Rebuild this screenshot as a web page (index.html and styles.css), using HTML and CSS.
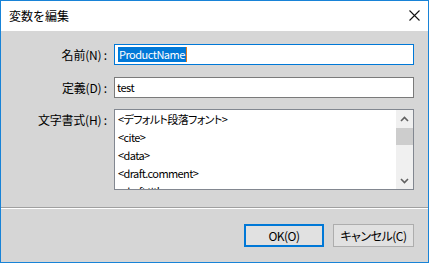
FILE: index.html
```html
<!DOCTYPE html>
<html>

<head>
  <title>変数を編集</title>
  <link rel="stylesheet" href="styles.css">
</head>

<body>
  <div class="window">
    <div class="titlebar">
      <span class="title">変数を編集</span>
      <span class="close">
        <svg width="11" height="11" viewBox="0 0 11 11">
          <path d="M0.5 0.5 L10.5 10.5 M10.5 0.5 L0.5 10.5" stroke="#111" stroke-width="1.1" fill="none" />
        </svg>
      </span>
    </div>

    <div class="form">
      <label class="field-label">名前(N) :</label>
      <div class="textbox focused"><span class="selected">ProductName</span><span class="caret"></span></div>

      <label class="field-label">定義(D) :</label>
      <div class="textbox">test</div>

      <label class="field-label top">文字書式(H) :</label>
      <div class="listbox">
        <ul class="items">
          <li>&lt;デフォルト段落フォント&gt;</li>
          <li>&lt;cite&gt;</li>
          <li>&lt;data&gt;</li>
          <li>&lt;draft.comment&gt;</li>
          <li>&lt;draft.title&gt;</li>
        </ul>
        <div class="scrollbar">
          <div class="arrow">
            <svg width="9" height="6" viewBox="0 0 9 6">
              <path d="M1 5 L4.5 1.5 L8 5" stroke="#606060" stroke-width="1.6" fill="none" />
            </svg>
          </div>
          <div class="thumb"></div>
          <div class="track"></div>
          <div class="arrow">
            <svg width="9" height="6" viewBox="0 0 9 6">
              <path d="M1 1 L4.5 4.5 L8 1" stroke="#606060" stroke-width="1.6" fill="none" />
            </svg>
          </div>
        </div>
      </div>
    </div>

    <div class="footer">
      <button class="btn default">OK(O)</button>
      <button class="btn cancel">キャンセル(C)</button>
    </div>
  </div>
</body>

</html>
```

FILE: styles.css
```css
body {
  margin: 0;
  background: #ffffff;
  font-family: "Noto Sans CJK JP", sans-serif;
  font-feature-settings: "palt";
  font-size: 12px;
  color: #000000;
}

.window {
  width: 429px;
  height: 263px;
  box-sizing: border-box;
  border: 1px solid #1883d7;
  background: #d6d6d6;
  display: flex;
  flex-direction: column;
}

.titlebar {
  height: 30px;
  background: #ffffff;
  display: flex;
  align-items: center;
  padding: 0 8px 0 8px;
}

.title {
  font-size: 12px;
  line-height: 16px;
  font-feature-settings: normal;
}

.close {
  margin-left: auto;
  display: flex;
  margin-top: -1px;
}

.form {
  height: 176px;
  box-sizing: border-box;
  padding-top: 13px;
  display: grid;
  grid-template-columns: 106px 300px;
  grid-template-rows: 21px 21px 81px;
  column-gap: 7px;
  row-gap: 12px;
  align-content: start;
}

.field-label {
  text-align: right;
  align-self: center;
  line-height: 16px;
  white-space: nowrap;
  letter-spacing: -0.2px;
}

.field-label.top {
  align-self: start;
  margin-top: 2px;
}

.textbox {
  box-sizing: border-box;
  height: 21px;
  border: 1px solid #7a7a7a;
  background: #ffffff;
  display: flex;
  align-items: center;
  padding-left: 2px;
  font-size: 11px;
  letter-spacing: -0.5px;
  line-height: 15px;
}

.textbox.focused {
  border-color: #0078d7;
  padding-left: 3px;
}

.selected {
  background: #0078d7;
  color: #ffffff;
  padding: 0 1px;
  height: 15px;
}

.caret {
  width: 1px;
  height: 15px;
  background: #e07a1f;
}

.listbox {
  box-sizing: border-box;
  height: 81px;
  margin-top: -1px;
  border: 1px solid #828790;
  background: #ffffff;
  display: flex;
  overflow: hidden;
}

.items {
  flex: 1;
  list-style: none;
  margin: 0;
  padding: 0 0 0 3px;
  overflow: hidden;
  font-size: 11px;
  letter-spacing: -0.6px;
}

.items li {
  height: 18px;
  line-height: 18px;
  white-space: nowrap;
}

.scrollbar {
  width: 17px;
  background: #f0f0f0;
  display: flex;
  flex-direction: column;
}

.arrow {
  height: 17px;
  display: flex;
  align-items: center;
  justify-content: center;
}

.thumb {
  height: 17px;
  margin-top: 1px;
  background: #cdcdcd;
}

.track {
  flex: 1;
}

.footer {
  flex: 1;
  border-top: 1px solid #a0a0a0;
  box-shadow: inset 0 1px 0 #ffffff;
  display: flex;
  justify-content: flex-end;
  align-items: flex-start;
  gap: 9px;
  padding: 16px 14px 0 0;
}

.btn {
  font-family: inherit;
  font-feature-settings: "palt";
  font-size: 12px;
  letter-spacing: -0.5px;
  height: 23px;
  background: #e1e1e1;
  color: #000000;
  padding: 0;
  margin: 0;
  line-height: 16px;
}

.btn.default {
  width: 80px;
  border: 2px solid #0078d7;
}

.btn.cancel {
  width: 81px;
  border: 1px solid #adadad;
}
```
